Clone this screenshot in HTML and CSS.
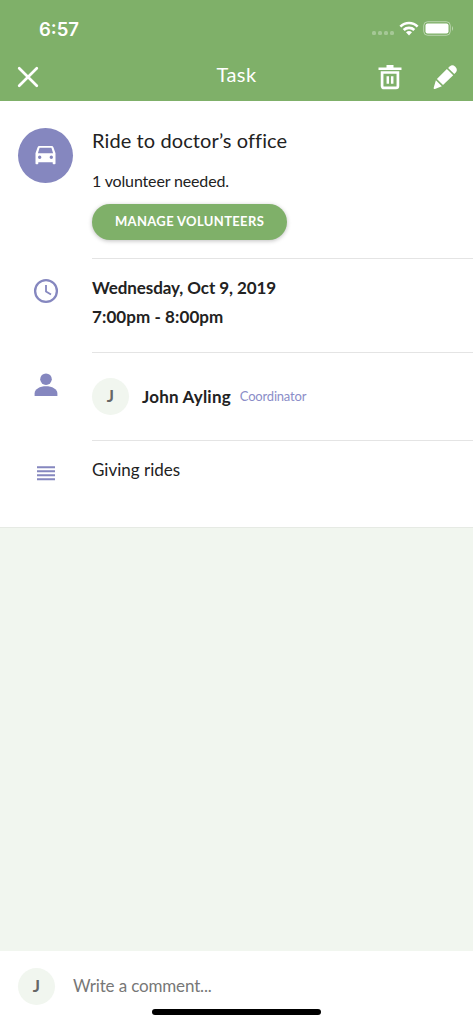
FILE: index.html
```html
<!DOCTYPE html>
<html lang="en">
<head>
<meta charset="utf-8">
<meta name="viewport" content="width=device-width, initial-scale=1">
<title>Task</title>
<link rel="stylesheet" href="styles.css">
</head>
<body>
<div class="screen">
  <header class="header">
    <div class="status">
      <span class="time">6:57</span>
      <div class="status-icons">
        <span class="dots"><i></i><i></i><i></i><i></i></span>
        <svg class="wifi" width="20" height="15" viewBox="0 0 20 15" fill="none" stroke="#fff" stroke-width="2.7"><path d="M1.4 5.6C6.2.8 13.8.8 18.600 5.6"/><path d="M4.700 9C7.600 6.200 12.400 6.200 15.300 9"/><path d="M7 11.300Q10 8.700 13 11.300L10 14.400Z" fill="#fff" stroke="none"/></svg>
        <svg class="battery" width="31" height="15" viewBox="0 0 31 15"><rect x=".7" y=".7" width="26.600" height="13.600" rx="4" fill="none" stroke="#fff" stroke-opacity=".45"/><rect x="2.500" y="2.500" width="23" height="10" rx="2" fill="#fff"/><path d="M29 5Q31 7.500 29 10Z" fill="#fff" fill-opacity=".5"/></svg>
      </div>
    </div>
    <div class="bar">
      <svg class="close" width="22" height="22" viewBox="0 0 22 22"><path d="M2.200 2.200L19.800 19.800M19.800 2.200L2.200 19.800" stroke="#fff" stroke-width="2.700" stroke-linecap="round"/></svg>
      <h1 class="heading">Task</h1>
      <div class="actions">
        <svg width="24" height="25" viewBox="0 0 24 25"><path fill="#fff" d="M8.500 0H15.500V2.500H23.500V5H.5V2.500H8.500Z"/><path fill="none" stroke="#fff" stroke-width="2.700" d="M4.100 7.500H19.900V21Q19.900 22.900 18 22.900H6Q4.100 22.900 4.100 21Z"/><path stroke="#fff" stroke-width="2.500" d="M9.800 11.200V18.800M14.200 11.200V18.800"/></svg>
        <svg width="25" height="25" viewBox="0 0 25 25" fill="#fff"><path d="M15.100 2.900L17 1.200Q19.500-.8 22.300 1.800Q25 4.600 22.900 7.300L21.300 9Z"/><path d="M13.900 4.100L20.200 10.200L10 20.100L3.900 14Z"/><path d="M2.900 15.300L8.900 21.200L1.900 23.900Q.4 24.200.7 22.700Z"/></svg>
      </div>
    </div>
  </header>
  <main class="card">
    <section class="row row-task">
      <div class="side"><div class="category">
        <svg width="21" height="19" viewBox="0 0 21 19" fill="#fff"><path fill-rule="evenodd" d="M4.300 0H16.700Q18 0 18.400 1.200L20.500 7.300V17.500Q20.500 18.300 19.700 18.300H18.500Q17.700 18.300 17.700 17.500V16.200H3.300V17.500Q3.300 18.300 2.500 18.300H1.300Q.5 18.300.5 17.500V7.300L2.600 1.200Q3 0 4.300 0ZM4.600 1.700L2.900 7.200H18.100L16.400 1.700ZM4.700 9.500A1.700 1.700 0 1 0 4.700 12.900A1.700 1.700 0 1 0 4.700 9.500ZM16.300 9.500A1.700 1.700 0 1 0 16.300 12.900A1.700 1.700 0 1 0 16.300 9.500Z"/></svg>
      </div></div>
      <div class="body">
        <h2 class="title">Ride to doctor’s office</h2>
        <p class="needed">1 volunteer needed.</p>
        <button class="manage">MANAGE VOLUNTEERS</button>
      </div>
    </section>
    <section class="row row-time">
      <div class="side"><svg width="26" height="26" viewBox="0 0 26 26" fill="none" stroke="#8587bf"><circle cx="13" cy="13" r="10.900" stroke-width="2.300"/><path d="M13 7V13.600L18 16.600" stroke-width="1.800"/></svg></div>
      <div class="body"><p class="date">Wednesday, Oct 9, 2019</p><p class="hours">7:00pm - 8:00pm</p></div>
    </section>
    <section class="row row-person">
      <div class="side"><svg width="24" height="24" viewBox="0 0 24 24" fill="#8587bf"><circle cx="12" cy="6.200" r="5.800"/><path d="M.6 23V20.500C.6 16 6 13.300 12 13.300S23.400 16 23.400 20.500V23Z"/></svg></div>
      <div class="body"><span class="avatar">J</span><span class="name">John Ayling</span><span class="role">Coordinator</span></div>
    </section>
    <section class="row row-notes">
      <div class="side"><svg width="18" height="15" viewBox="0 0 18 15"><path d="M0 1.200H18M0 5.200H18M0 9.200H18M0 13.200H18" stroke="#8587bf" stroke-width="2"/></svg></div>
      <div class="body"><p class="notes">Giving rides</p></div>
    </section>
  </main>
  <footer class="composer">
    <div class="composer-row"><span class="avatar">J</span><span class="placeholder">Write a comment...</span></div>
    <div class="home"></div>
  </footer>
</div>
</body>
</html>
```
FILE: styles.css
```css
* { box-sizing: border-box; }
body { margin: 0; font-family: Lato, "Open Sans", sans-serif; color: #222; }
h1, h2, p { margin: 0; font-weight: 400; white-space: nowrap; }
svg { display: block; }
.screen { height: 1024px; display: flex; flex-direction: column; background: #f1f6ef; overflow: hidden; }
.header { height: 101px; flex: none; background: #7fb069; color: #fff; }
.status { height: 56px; padding: 0 19px 0 39px; display: flex; justify-content: space-between; align-items: center; }
.time { font: 600 18.500px/24px Inter, sans-serif; padding-top: 1px; }
.status-icons { display: flex; align-items: center; }
.dots { display: flex; gap: 2px; margin: 9px 5px 0 0; }
.dots i { width: 4px; height: 4px; border-radius: 1.500px; background: rgba(255,255,255,.3); }
.wifi { margin-right: 4px; }
.bar { height: 42px; display: grid; grid-template-columns: 1fr auto 1fr; align-items: center; padding: 0 15px 0 17px; }
.heading { font-size: 20px; line-height: 24px; letter-spacing: .4px; padding-bottom: 6px; margin-left: -2px; }
.actions { display: flex; justify-content: flex-end; gap: 31px; padding-top: 1px; }
.card { height: 427px; flex: none; background: #fff; border-bottom: 1px solid #e6eae4; }
.row { display: flex; }
.side { width: 92px; flex: none; display: flex; justify-content: center; align-items: flex-start; }
.body { flex: 1; border-bottom: 1px solid #e4e4e4; }
.row-task { height: 158px; }
.row-task .side { padding: 27px 1px 0 0; }
.category { width: 55px; height: 55px; border-radius: 50%; background: #8587bf; display: flex; align-items: center; justify-content: center; }
.title { font-size: 20px; line-height: 28px; margin-top: 25px; letter-spacing: .1px; }
.needed { font-size: 16px; line-height: 22px; margin-top: 16px; letter-spacing: -.15px; }
.manage { display: block; margin-top: 12px; width: 195px; height: 36px; border: 0; border-radius: 18px; padding: 0 0 2px; background: #7fb069; color: #fff; font: 700 13px/18px Lato, sans-serif; letter-spacing: .35px; box-shadow: 0 1px 4px rgba(0,0,0,.25); white-space: nowrap; }
.row-time { height: 94px; }
.row-time .side { padding-top: 19px; }
.date, .hours { font-size: 17px; line-height: 29px; font-weight: 700; }
.date { margin-top: 14px; letter-spacing: -.08px; }
.hours { letter-spacing: .07px; }
.row-person { height: 88px; }
.row-person .side { padding-top: 20px; }
.row-person .body { display: flex; align-items: center; }
.avatar { width: 37px; height: 37px; border-radius: 50%; background: #f1f6ef; color: #666; font-size: 17px; font-weight: 700; display: flex; align-items: center; justify-content: center; padding-bottom: 2px; }
.name { font-size: 17px; font-weight: 700; margin-left: 13px; letter-spacing: .2px; }
.role { font-size: 13px; color: #8b8dc8; margin-left: 9px; letter-spacing: -.2px; }
.row-person .name { padding-bottom: 1px; }
.row-person .role { padding-bottom: 1px; }
.row-notes .side { padding-top: 25px; }
.row-notes .body { border: 0; }
.notes { font-size: 17px; line-height: 24px; margin-top: 17px; }
.composer { margin-top: auto; height: 73px; flex: none; background: #fff; display: flex; flex-direction: column; }
.composer-row { display: flex; align-items: center; padding: 17px 18px 0; }
.placeholder { font-size: 17px; color: #777; margin-left: 18px; letter-spacing: -.15px; padding-bottom: 2px; }
.home { width: 169px; height: 6px; border-radius: 3px; background: #000; margin: 4px auto 0; }
```
